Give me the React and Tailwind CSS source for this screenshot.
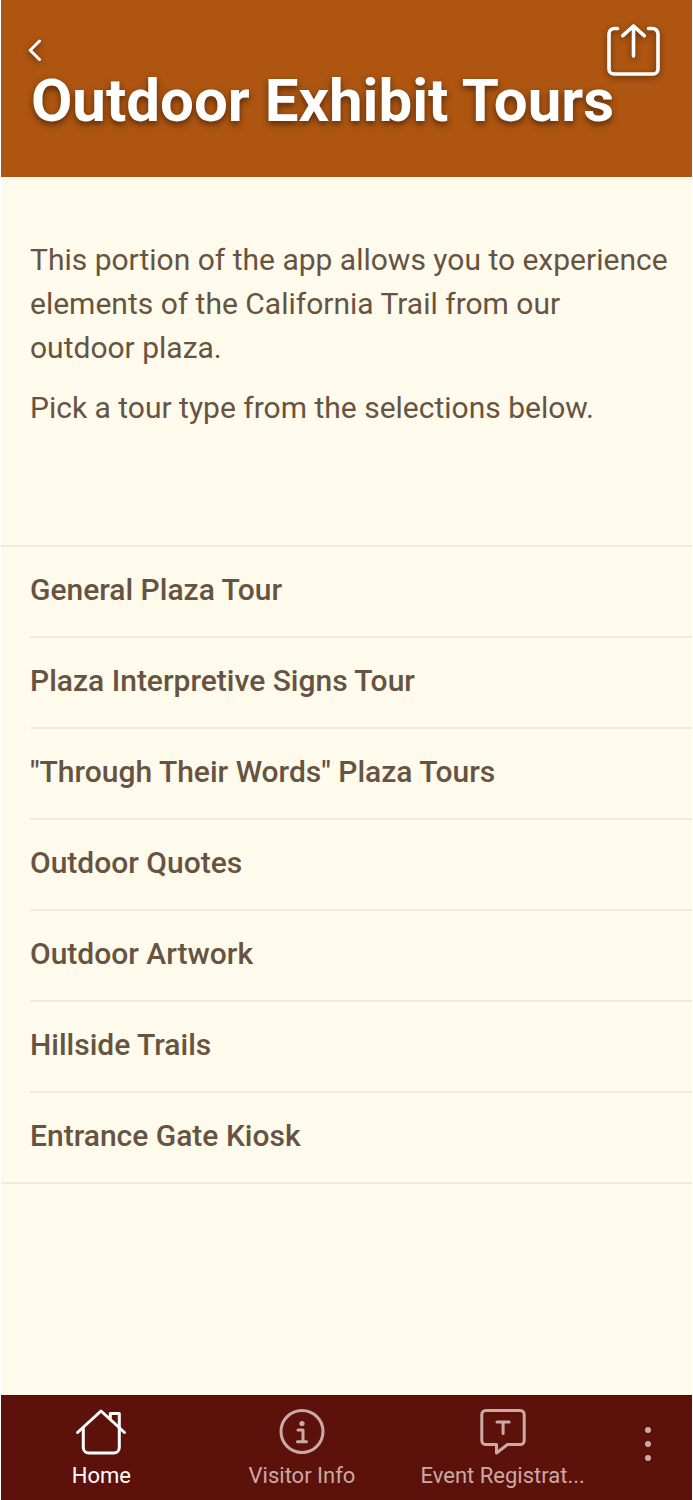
import React from 'react';

const tours = [
  'General Plaza Tour',
  'Plaza Interpretive Signs Tour',
  '"Through Their Words" Plaza Tours',
  'Outdoor Quotes',
  'Outdoor Artwork',
  'Hillside Trails',
  'Entrance Gate Kiosk',
];

function BackIcon() {
  return (
    <svg viewBox="0 0 16 24" className="w-4 h-6 drop-shadow-[0_2px_3px_rgba(0,0,0,0.45)]" fill="none" stroke="currentColor" strokeWidth="3" strokeLinecap="round" strokeLinejoin="round">
      <path d="M12.5 3 3.2 12.3l9.3 9.2" />
    </svg>
  );
}

function ShareIcon() {
  return (
    <svg viewBox="0 0 54 54" className="w-[54px] h-[54px] drop-shadow-[0_2px_3px_rgba(0,0,0,0.45)]" fill="none" stroke="currentColor" strokeWidth="3.6" strokeLinecap="round" strokeLinejoin="round">
      <path d="M11.5 5.5H8.500A5.500 5.500 0 0 0 3 11v35a5 5 0 0 0 5 5h39a5 5 0 0 0 5-5V11a5.500 5.500 0 0 0-5.500-5.500h-4" />
      <path d="M27.500 33V3M16.800 12.700 27.500 3l10.700 9.700" />
    </svg>
  );
}

function HomeIcon() {
  return (
    <svg viewBox="0 0 52 48" className="w-[52px] h-12" fill="none" stroke="currentColor" strokeWidth="3" strokeLinecap="round" strokeLinejoin="round">
      <path d="M2.5 24.5 26 3l23.500 21.500" />
      <path d="M8.300 20v19.500a5.500 5.500 0 0 0 5.500 5.500h25a5.500 5.500 0 0 0 5.500-5.500V5.500h-9v5" />
    </svg>
  );
}

function InfoIcon() {
  return (
    <svg viewBox="0 0 52 48" className="w-[52px] h-12" fill="none" stroke="currentColor" strokeWidth="3" strokeLinecap="round" strokeLinejoin="round">
      <circle cx="26" cy="23.5" r="21" />
      <circle cx="26" cy="15.5" r="2.6" fill="currentColor" stroke="none" />
      <path d="M22 22h5v11.500M21.500 33.800h9" />
    </svg>
  );
}

function EventIcon() {
  return (
    <svg viewBox="0 0 52 48" className="w-[52px] h-12" fill="none" stroke="currentColor" strokeWidth="3" strokeLinecap="round" strokeLinejoin="round">
      <path d="M8.800 2.500h34.400a4 4 0 0 1 4 4V32.500a4 4 0 0 1-4 4H30.500l-11 8.500v-8.500H8.800a4 4 0 0 1-4-4V6.500a4 4 0 0 1 4-4Z" />
      <path d="M20 14h12.200M26.100 14v11.500" />
    </svg>
  );
}

const tabs = [
  { label: 'Home', Icon: HomeIcon, active: true },
  { label: 'Visitor Info', Icon: InfoIcon },
  { label: 'Event Registrat...', Icon: EventIcon },
];

export default function App() {
  return (
    <div className="min-h-screen flex flex-col px-px bg-white font-[Roboto,sans-serif]">
      <div className="flex-1 flex flex-col bg-[#fffbec] text-[#675341]">

        {/* HEADER */}
        <header className="bg-[#ad5511] text-white pl-[30px] pr-8 pt-[23px] pb-12">
          <div className="flex justify-between items-center -ml-1">
            <button aria-label="Back"><BackIcon /></button>
            <button aria-label="Share"><ShareIcon /></button>
          </div>
          <h1 className="-mt-1 text-[60px] leading-[56px] font-bold [text-shadow:0_3px_6px_rgba(0,0,0,0.5)]">Outdoor Exhibit Tours</h1>
        </header>

        <main className="flex-1">
          {/* INTRO */}
          <div className="pl-[29px] pr-6 pt-[61px] pb-[115px] text-[30px] leading-[44px] space-y-4">
            <p>
              This portion of the app allows you to experience elements of the California Trail from our outdoor plaza.
            </p>
            <p>Pick a tour type from the selections below.</p>
          </div>

          {/* TOUR LIST */}
          <ul className="border-y-2 border-[#efecdf]">
            {tours.map((name, i) => (
              <li key={name} className={i < tours.length - 1 ? 'ml-[29px] border-b-2 border-[#efecdf]' : 'ml-[29px]'}>
                <a href="#" className="block pt-[21px] pb-6 text-[30px] leading-[44px] font-medium">{name}</a>
              </li>
            ))}
          </ul>
        </main>

        {/* BOTTOM TABS */}
        <nav className="flex bg-[#5c110a] border-t border-[#4a0d08] text-[#cba9a5]">
          {tabs.map(({ label, Icon, active }) => (
            <a key={label} href="#" className={active ? 'flex-1 flex flex-col items-center py-3 text-white' : 'flex-1 flex flex-col items-center py-3'}>
              <Icon />
              <span className="mt-2 text-[22px] leading-6">{label}</span>
            </a>
          ))}
          <button aria-label="More" className="w-[89px] flex flex-col items-center justify-center gap-2 pb-2">
            <span className="w-1.5 h-1.5 rounded-full bg-current" />
            <span className="w-1.5 h-1.5 rounded-full bg-current" />
            <span className="w-1.5 h-1.5 rounded-full bg-current" />
          </button>
        </nav>
      </div>
    </div>
  );
}
